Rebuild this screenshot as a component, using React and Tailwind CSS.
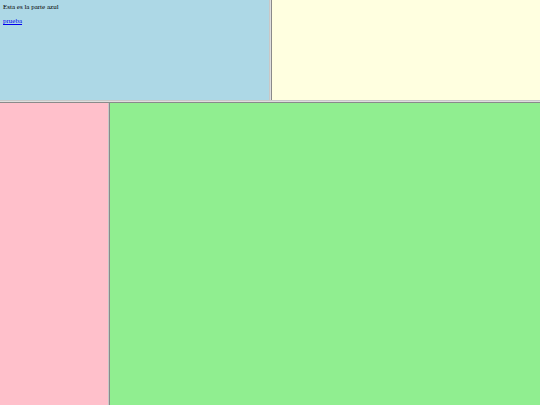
export default function App() {
    return (
        <div className="flex h-[405px] w-[540px] flex-col overflow-hidden bg-[#e0e0e0]" style={{ fontFamily: '"Liberation Serif", serif' }}>
            <div className="flex h-[100px]">
                <div className="w-[269px] bg-[#add8e6] px-[3px] pt-[3px] text-[7px] leading-[8px] text-black">
                    Esta es la parte azul
                    <p className="mt-[6px]">
                        <a href="#" className="text-[#0000ee] underline">prueba</a>
                    </p>
                </div>
                <div className="w-[3px] border-l border-r border-l-[#c8c8c8] border-r-[#8a8a8a] bg-[#dedede]"></div>
                <div className="flex-1 bg-[#ffffe0]"></div>
            </div>
            <div className="h-[3px] border-t border-b border-t-[#c8c8c8] border-b-[#8a8a8a] bg-[#dedede]"></div>
            <div className="flex flex-1">
                <div className="w-[108px] bg-[#ffc0cb]"></div>
                <div className="w-[2px] border-l border-r border-l-[#c8c8c8] border-r-[#8a8a8a]"></div>
                <div className="flex-1 bg-[#90ee90]"></div>
            </div>
        </div>
    )
}
